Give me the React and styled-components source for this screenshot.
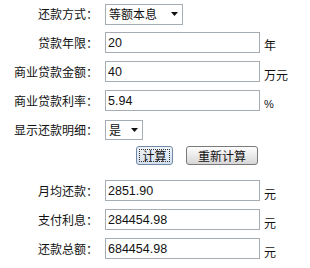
import React from "react";
import styled, { createGlobalStyle } from "styled-components";

const GlobalStyle = createGlobalStyle`
  html, body {
    margin: 0;
    padding: 0;
    background: #fff;
  }
  body {
    font-family: "Noto Sans CJK SC", "Liberation Sans", sans-serif;
    font-size: 12px;
    color: #111;
  }
`;

const Form = styled.div`
  width: 310px;
  padding-top: 0;
`;

const Row = styled.div`
  display: flex;
  align-items: center;
  height: ${(p) => p.h || 29}px;
`;

const Label = styled.div`
  width: 98px;
  text-align: right;
  margin-right: 7px;
  white-space: nowrap;
  line-height: 14px;
`;

const Input = styled.input`
  box-sizing: border-box;
  width: 155px;
  height: 21px;
  border: 1px solid #a5acb2;
  padding: 0 0 0 2px;
  margin: 0;
  font-family: "Liberation Sans", Arial, sans-serif;
  font-size: 12.5px;
  color: #111;
  background: #fff;
  outline: none;
`;

const Unit = styled.span`
  align-self: flex-start;
  margin-top: ${(p) => p.top || 14}px;
  margin-left: 4px;
  line-height: 14px;
  font-family: ${(p) =>
    p.latin ? `"Liberation Sans", Arial, sans-serif` : "inherit"};
  font-size: ${(p) => (p.latin ? "11px" : "12px")};
`;

const Select = styled.div`
  box-sizing: border-box;
  width: ${(p) => p.w}px;
  height: ${(p) => p.h || 21}px;
  border: 1px solid #a5acb2;
  background: #fff;
  display: flex;
  align-items: center;
  justify-content: space-between;
  padding: 0 4px 0 3px;
  line-height: 14px;
`;

const Arrow = styled.svg`
  width: 7px;
  height: 4px;
  display: block;
`;

const Buttons = styled.div`
  display: flex;
  align-items: center;
  height: 23px;
  padding-left: 136px;
  gap: 13px;
`;

const Button = styled.button`
  position: relative;
  box-sizing: border-box;
  width: ${(p) => p.w}px;
  height: 19px;
  margin: 0;
  padding: 0;
  font-family: "Noto Sans CJK SC", sans-serif;
  font-size: 12px;
  line-height: 14px;
  color: #111;
  border: 1px solid ${(p) => (p.focused ? "#7189a8" : "#7a7a7a")};
  border-radius: 3px;
  background: ${(p) =>
    p.focused
      ? "linear-gradient(#eef3f9, #d4e0ec)"
      : "linear-gradient(#fdfdfd, #e6e6e6 60%, #d6d6d6)"};
  &::after {
    content: "";
    display: ${(p) => (p.focused ? "block" : "none")};
    position: absolute;
    inset: 2px;
    border: 1px dotted #333;
  }
`;

const Spacer = styled.div`
  height: 9px;
`;

const DownArrow = () => (
  <Arrow viewBox="0 0 7 4">
    <path d="M0 0h7L3.5 4z" fill="#111" />
  </Arrow>
);

export default function App() {
  return (
    <>
      <GlobalStyle />
      <Form>
        <Row h={28}>
          <Label>还款方式：</Label>
          <Select w={78}>
            <span>等额本息</span>
            <DownArrow />
          </Select>
        </Row>
        <Row>
          <Label>贷款年限：</Label>
          <Input defaultValue="20" />
          <Unit top={10}>年</Unit>
        </Row>
        <Row>
          <Label>商业贷款金额：</Label>
          <Input defaultValue="40" />
          <Unit top={11}>万元</Unit>
        </Row>
        <Row>
          <Label>商业贷款利率：</Label>
          <Input defaultValue="5.94" />
          <Unit top={11} latin>%</Unit>
        </Row>
        <Row>
          <Label>显示还款明细：</Label>
          <Select w={38} h={20}>
            <span>是</span>
            <DownArrow />
          </Select>
        </Row>
        <Buttons>
          <Button w={37} focused>计算</Button>
          <Button w={72}>重新计算</Button>
        </Buttons>
        <Spacer />
        <Row>
          <Label>月均还款：</Label>
          <Input defaultValue="2851.90" />
          <Unit top={11}>元</Unit>
        </Row>
        <Row>
          <Label>支付利息：</Label>
          <Input defaultValue="284454.98" />
          <Unit top={11}>元</Unit>
        </Row>
        <Row>
          <Label>还款总额：</Label>
          <Input defaultValue="684454.98" />
          <Unit top={11}>元</Unit>
        </Row>
      </Form>
    </>
  );
}
